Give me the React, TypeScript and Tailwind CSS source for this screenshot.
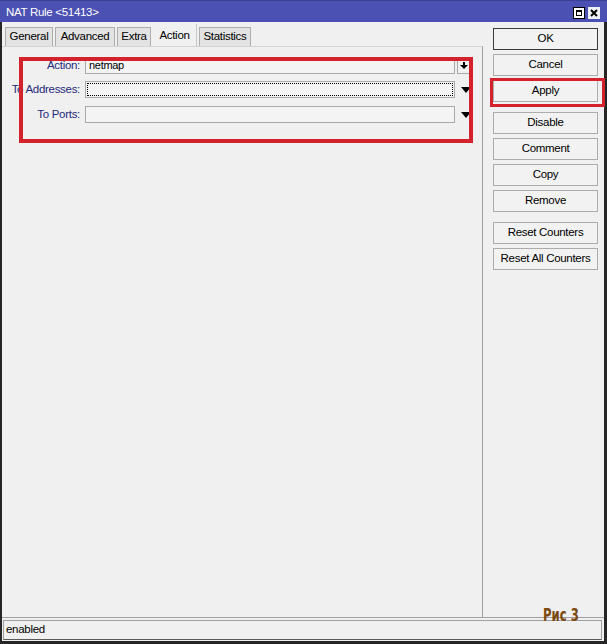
import React from 'react';

const tabs = [
    { label: 'General', w: 48 },
    { label: 'Advanced', w: 60 },
    { label: 'Extra', w: 34 },
    { label: 'Action', w: 44, active: true },
    { label: 'Statistics', w: 52 },
];

const buttonGroups = [
    ['OK', 'Cancel', 'Apply'],
    ['Disable', 'Comment', 'Copy', 'Remove'],
    ['Reset Counters', 'Reset All Counters'],
];

function DownArrow({ small }: { small?: boolean }) {
    return small ? (
        <svg width="8" height="7" viewBox="0 0 8 7" className="block">
            <path d="M3 0 H5 V3 H8 L4 7 L0 3 H3 Z" fill="#000" />
        </svg>
    ) : (
        <svg width="10" height="6" viewBox="0 0 10 6" className="block">
            <path d="M0 0 H10 L5 6 Z" fill="#000" />
        </svg>
    );
}

function FieldRow({ label, value, focused, boxed, className = '' }: { label: string; value?: string; focused?: boolean; boxed?: boolean; className?: string }) {
    return (
        <div className={`flex items-center h-[17px] ${className}`}>
            <div className="w-[78px] text-right text-[#1f2a7a] whitespace-nowrap text-[11.5px]">{label}</div>
            <div className="ml-[5px] w-[370px] h-[17px] border border-[#a9a9a9] bg-[#f4f4f4] p-px">
                <div className={`h-full flex items-center pl-[2px] text-black ${focused ? 'border border-dotted border-black' : ''}`}>
                    {value}
                </div>
            </div>
            {boxed ? (
                <div className="ml-[2px] w-[14px] h-[17px] border border-[#a9a9a9] flex items-center justify-center">
                    <DownArrow small />
                </div>
            ) : (
                <div className="ml-[2px] w-[18px] flex items-center justify-center">
                    <DownArrow />
                </div>
            )}
        </div>
    );
}

export default function App() {
    return (
        <div className="relative w-[607px] h-[644px] bg-[#f0f0f0] flex flex-col overflow-hidden font-['Liberation_Sans',Arial,sans-serif] text-[11px] tracking-[-0.3px] text-black">
            {/* title bar */}
            <div className="h-[22px] shrink-0 bg-[#4b50b3] border-t border-[#3a3f98] flex items-center pl-[6px] pr-[7px] pt-[3px]">
                <span className="text-white text-[11.5px] tracking-[-0.3px]">NAT Rule &lt;51413&gt;</span>
                <div className="ml-auto flex gap-[3px]">
                    <div className="w-[12px] h-[12px] bg-white border border-black p-[2px]">
                        <div className="w-full h-full border border-black border-t-2" />
                    </div>
                    <div className="w-[12px] h-[12px] bg-[#eef0f8] flex items-center justify-center">
                        <svg width="8" height="8" viewBox="0 0 8 8">
                            <path d="M1 1 L7 7 M7 1 L1 7" stroke="#000" strokeWidth="2" />
                        </svg>
                    </div>
                </div>
            </div>

            <div className="flex-1 flex flex-col border-l-2 border-r-[3px] border-b-[3px] border-[#262626]">
                <div className="flex-1 flex border-b border-[#a0a0a0]">
                    {/* left: tabs + panel */}
                    <div className="w-[481px] flex flex-col">
                        <div className="h-[24px] flex items-end pl-[3px] gap-[2px]">
                            {tabs.map(t => (
                                <div
                                    key={t.label}
                                    style={{ width: t.w }}
                                    className={t.active
                                        ? 'h-[22px] flex items-start justify-center pt-[3px] bg-[#f0f0f0] border-r border-[#c8c8c8] text-[11.5px]'
                                        : 'h-[19px] flex items-center justify-center bg-[#e3e3e3] border border-b-0 border-[#adadad] text-[11.5px]'}
                                >
                                    {t.label}
                                </div>
                            ))}
                        </div>
                        <div className="flex-1 border-r border-t border-[#d4d4d4] border-r-[#a0a0a0] pt-[10px]">
                            <FieldRow label="Action:" value="netmap" boxed />
                            <FieldRow label="To Addresses:" focused className="mt-[7px]" />
                            <FieldRow label="To Ports:" className="mt-[8px]" />
                        </div>
                    </div>

                    {/* right: buttons */}
                    <div className="flex-1 pl-[10px] pt-[6px] flex flex-col gap-[10px]">
                        {buttonGroups.map((group, gi) => (
                            <div key={gi} className="flex flex-col gap-[4px]">
                                {group.map(b => (
                                    <div
                                        key={b}
                                        className={`w-[105px] h-[22px] flex items-center justify-center text-[11.5px] bg-[#f2f2f2] border ${b === 'OK' ? 'border-[#3a3a3a]' : 'border-[#acacac]'}`}
                                    >
                                        {b}
                                    </div>
                                ))}
                            </div>
                        ))}
                    </div>
                </div>

                {/* status bar */}
                <div className="h-[23px] pt-[2px] pb-px pl-px pr-[2px]">
                    <div className="h-full border border-[#a0a0a0] border-b-[#5a5a5a] flex items-center pl-[2px] text-[11.5px]">
                        enabled
                    </div>
                </div>
            </div>

            {/* annotations */}
            <div className="absolute left-[19px] top-[57px] w-[454px] h-[86px] border-4 border-[#d4222d]" />
            <div className="absolute left-[490px] top-[78px] w-[115px] h-[29px] border-[3px] border-[#d4222d]" />
            <div className="absolute left-[543px] top-[601px] origin-left scale-x-[0.72] text-[18px] font-bold tracking-[0px] text-[#7a4a12] font-['DejaVu_Sans_Condensed',sans-serif]">
                Рис 3
            </div>
        </div>
    );
}
